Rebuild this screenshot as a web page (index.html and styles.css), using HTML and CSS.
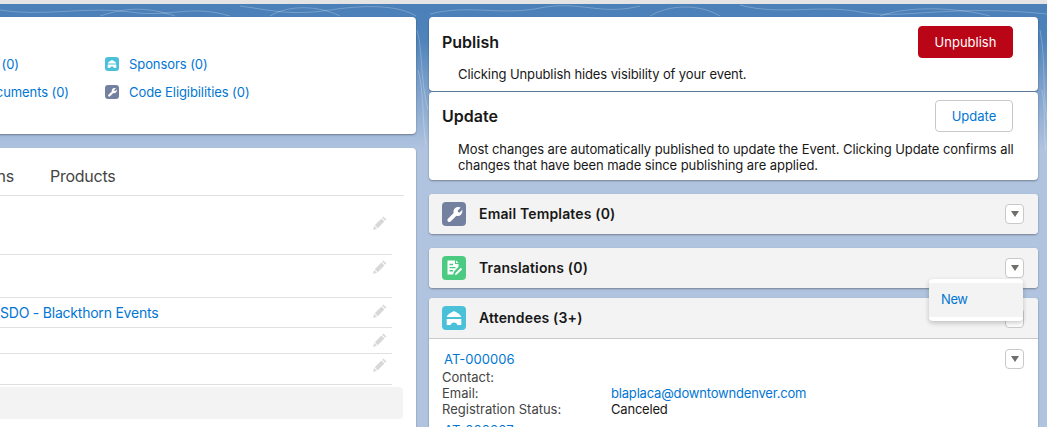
FILE: index.html
```html
<!DOCTYPE html>
<html lang="en">
<head>
<meta charset="utf-8">
<title>Event</title>
<link rel="stylesheet" href="styles.css">
</head>
<body>
<svg class="topo" width="1047" height="160" viewBox="0 0 1047 160" fill="none" aria-hidden="true">
  <path d="M0 10C40 17 90 6 130 12S190 4 230 16M100 16C130 6 150 8 175 16M240 6C270 10 290 16 330 10S400 6 416 16M270 16C290 4 320 6 340 16"/>
  <path d="M430 14C470 4 500 16 540 8S600 16 640 6M650 16C670 4 700 4 720 16M740 5C780 16 820 4 860 12S950 4 1047 14M880 16C910 5 960 8 990 16"/>
  <path d="M417 30C423 50 420 80 428 110M418 70C424 90 422 120 426 145M1040 30C1046 60 1042 90 1047 120M1042 90C1046 110 1043 130 1046 150"/>
</svg>
<div class="layout">
  <main class="left">
    <section class="card links">
      <div class="link-col">
        <a class="link-row" href="#"><span class="clip-name clip-short">Sessions (0)</span></a>
        <a class="link-row" href="#"><span class="clip-name">Documents (0)</span></a>
      </div>
      <div class="link-col">
        <a class="link-row" href="#">
          <span class="ico ico-sm teal"><svg viewBox="0 0 24 24"><use href="#tent"/></svg></span>Sponsors (0)
        </a>
        <a class="link-row" href="#">
          <span class="ico ico-sm slate"><svg viewBox="0 0 24 24"><use href="#wrench"/></svg></span>Code Eligibilities (0)
        </a>
      </div>
    </section>
    <section class="card details">
      <nav class="tabs">
        <span class="tab tab-first">Registrations</span>
        <span class="tab tab-last">Products</span>
      </nav>
      <div class="rows">
        <div class="row row-a"><svg class="pencil" viewBox="0 0 14 14"><use href="#pencil"/></svg></div>
        <div class="row row-b"><svg class="pencil" viewBox="0 0 14 14"><use href="#pencil"/></svg></div>
        <div class="row row-c"><a href="#" class="row-link">SDO - Blackthorn Events</a><svg class="pencil" viewBox="0 0 14 14"><use href="#pencil"/></svg></div>
        <div class="row row-d"><svg class="pencil" viewBox="0 0 14 14"><use href="#pencil"/></svg></div>
        <div class="row row-e"><svg class="pencil" viewBox="0 0 14 14"><use href="#pencil"/></svg></div>
      </div>
      <div class="section-bar"></div>
    </section>
  </main>
  <aside class="right">
    <div class="stack">
      <section class="card action action-publish">
        <div class="action-head">
          <h2>Publish</h2>
          <button class="btn btn-red">Unpublish</button>
        </div>
        <p>Clicking Unpublish hides visibility of your event.</p>
      </section>
      <section class="card action action-update">
        <div class="action-head">
          <h2>Update</h2>
          <button class="btn btn-white">Update</button>
        </div>
        <p>Most changes are automatically published to update the Event. Clicking Update confirms all changes that have been made since publishing are applied.</p>
      </section>
    </div>
    <section class="card related">
      <header class="rel-head">
        <span class="ico slate"><svg viewBox="0 0 24 24"><use href="#wrench"/></svg></span>
        <h3>Email Templates (0)</h3>
        <button class="caret" aria-label="Menu"><i></i></button>
      </header>
    </section>
    <section class="card related related-menu">
      <header class="rel-head">
        <span class="ico green"><svg viewBox="0 0 24 24"><use href="#doc"/></svg></span>
        <h3>Translations (0)</h3>
        <button class="caret" aria-label="Menu"><i></i></button>
      </header>
      <div class="menu"><a href="#">New</a></div>
    </section>
    <section class="card related attendees">
      <header class="rel-head">
        <span class="ico teal"><svg viewBox="0 0 24 24"><use href="#tent"/></svg></span>
        <h3>Attendees (3+)</h3>
        <button class="caret" aria-label="Menu"><i></i></button>
      </header>
      <div class="att-body">
        <div class="att-top">
          <a href="#" class="att-id">AT-000006</a>
          <button class="caret" aria-label="Menu"><i></i></button>
        </div>
        <dl class="att-grid">
          <dt>Contact:</dt><dd></dd>
          <dt>Email:</dt><dd><a href="#" class="att-mail">blaplaca@downtowndenver.com</a></dd>
          <dt>Registration Status:</dt><dd>Canceled</dd>
        </dl>
        <a href="#" class="att-id att-next">AT-000007</a>
      </div>
    </section>
  </aside>
</div>
<svg class="defs" width="0" height="0" aria-hidden="true">
  <defs>
    <g id="wrench"><path fill="#fff" d="M19.6 4.6l-3.3 3.3c-.2.2-.2.4 0 .6l.5 1.2 1.2.5c.2.2.4.2.6 0l3-3c.5 2.4-.2 4.6-1.8 5.9-1.4 1.2-3.3 1.5-5 1l-6.7 6.6c-.9.9-2.3.9-3.1 0-.9-.9-.9-2.3 0-3.1l6.6-6.7c-.5-1.8-.2-3.7 1-5.1 1.4-1.6 3.4-2.4 5.6-1.8z" transform="translate(12 12) scale(.86) translate(-12 -12)"/></g>
    <g id="tent"><path fill="#fff" d="M12 5l4.5 2.600c1.200.8 2.200 2 2.800 3.400H4.700c.6-1.400 1.600-2.600 2.800-3.400zM4.700 13h14.600v6h-4c-.2-1.500-1.600-2.600-3.300-2.600S8.900 17.500 8.700 19h-4z"/></g>
    <g id="doc"><path fill="#fff" fill-rule="evenodd" d="M5.500 4.500h7.500v3.500h3.500v2.800l-4.500 4.600-.8 3.100H5.500zm2 3.300v1.400h3.500V7.800zm0 3.100v1.400h6v-1.400zm0 3.100v1.400h3.500V14z"/><path fill="#fff" d="M14 4.500l2.500 2.500H14zM18.800 11.800l1.400 1.400-5.400 5.400-1.900.5.500-1.900z"/></g>
    <g id="pencil"><path fill="#d8d8d8" d="M10.400.6l3 3-1.200 1.200-3-3zM8.400 2.600l3 3-6.600 6.600-3-3zM1.200 10l2.800 2.800L0 14z"/></g>
  </defs>
</svg>
</body>
</html>
```
FILE: styles.css
```css
* { box-sizing: border-box; }
html, body { height: 427px; overflow: hidden; }
body {
  margin: 0;
  position: relative;
  font-family: Inter, "Liberation Sans", sans-serif;
  font-size: 13px;
  line-height: 16px;
  color: #181818;
  border-top: 4px solid #e4e4e4;
  background: linear-gradient(180deg, #4a7fb8 0, #4f83ba 40px, #7fa2cc 90px, #b0c4df 150px, #b0c4df 100%);
}
a { color: #0176d3; text-decoration: none; }
h2, h3, p, dl, dd { margin: 0; }
button { font: inherit; cursor: pointer; }
.topo { position: absolute; left: 0; top: -4px; }
.topo path { stroke: rgba(255,255,255,.24); stroke-width: 1; }
.defs { position: absolute; }
.layout {
  position: relative;
  display: flex;
  gap: 13px;
  margin-left: -84px;
  padding-top: 13px;
}
.left { width: 500px; display: flex; flex-direction: column; gap: 14px; flex: none; }
.right { width: 609px; flex: none; }
.card {
  background: #fff;
  border-radius: 4px;
  box-shadow: 0 1px 2px rgba(0,0,0,.35);
}
.links {
  height: 117px;
  padding-top: 39px;
  display: flex;
}
.link-col { display: flex; flex-direction: column; gap: 12px; }
.link-col:first-child { width: 189px; }
.link-row { display: flex; align-items: center; height: 16px; white-space: nowrap; letter-spacing: -.08px; }
.clip-name { display: block; width: 153px; text-align: right; }
.clip-short { width: 103px; }
.ico {
  width: 24px;
  height: 24px;
  border-radius: 4px;
  display: flex;
  flex: none;
  align-items: center;
  justify-content: center;
}
.ico svg { width: 100%; height: 100%; display: block; }
.ico-sm { width: 14px; height: 14px; border-radius: 3px; margin-right: 10px; }
.teal { background: #4bc0d9; }
.slate { background: #7480a0; }
.green { background: #4bca81; }
.details { height: 300px; padding: 0 12px 0 0; }
.tabs {
  height: 48px;
  border-bottom: 1px solid #e0e0e0;
  display: flex;
  align-items: center;
  padding-top: 9px;
  font-size: 16px;
  letter-spacing: -.25px;
  color: #444;
}
.tab { white-space: nowrap; flex: none; }
.tab-first { width: 98px; text-align: right; }
.tab-last { margin-left: 36px; }
.rows { margin-right: 12px; }
.row {
  display: flex;
  align-items: center;
  border-bottom: 1px solid #e0e0e0;
  padding-right: 5px;
}
.row-a { height: 59px; padding-bottom: 4px; }
.row-b { height: 43px; padding-bottom: 18px; }
.row-c { height: 30px; }
.row-c .pencil { margin-bottom: 3px; }
.row-d { height: 26px; padding-bottom: 2px; }
.row-e { height: 31px; padding-bottom: 8px; }
.row-link { margin-left: 84px; font-size: 14px; white-space: nowrap; letter-spacing: -.22px; }
.pencil { width: 14px; height: 14px; margin-left: auto; flex: none; }
.section-bar { height: 32px; margin: 2px 1px 0 0; background: #f3f3f3; border-radius: 4px; }
.stack { display: flex; flex-direction: column; gap: 1px; margin-bottom: 14px; }
.action { padding: 9px 25px 0 13px; }
.action-publish { height: 74px; }
.action-update { height: 88px; padding-top: 8px; }
.action-head { display: flex; justify-content: space-between; align-items: center; }
.action h2 { font-size: 16px; font-weight: 600; line-height: 32px; }
.action p { margin: 8px 0 0 16px; line-height: 16px; letter-spacing: -.1px; }
.action-update p { margin: 9px -2px 0 16px; letter-spacing: -.07px; }
.btn { height: 32px; border-radius: 4px; font-size: 13px; padding: 0; }
.btn-red { width: 95px; background: #ba0517; border: 1px solid #ba0517; color: #fff; }
.btn-white { width: 78px; background: #fff; border: 1px solid #c9c9c9; color: #0176d3; }
.related { position: relative; margin-bottom: 14px; }
.related-menu { margin-bottom: 10px; z-index: 2; }
.rel-head {
  height: 40px;
  background: #f3f3f3;
  border-radius: 4px;
  display: flex;
  align-items: center;
  padding: 0 14px 0 13px;
}
.rel-head h3 { margin-left: 13px; font-size: 14px; font-weight: 600; letter-spacing: .16px; }
.caret {
  width: 19px;
  height: 20px;
  margin-left: auto;
  background: #fff;
  border: 1px solid #c9c9c9;
  border-radius: 4px;
  padding: 0;
  display: flex;
  align-items: center;
  justify-content: center;
  flex: none;
}
.caret i { width: 0; height: 0; border-left: 4.5px solid transparent; border-right: 4.5px solid transparent; border-top: 6px solid #706e6b; }
.menu {
  position: absolute;
  top: 31px;
  right: 15px;
  width: 94px;
  height: 42px;
  background: #fff;
  border-radius: 4px;
  padding: 4px 0;
  box-shadow: 0 2px 5px rgba(0,0,0,.22);
}
.menu a { display: flex; align-items: center; height: 34px; padding: 0 0 2px 12px; background: #f3f3f3; letter-spacing: -.4px; }
.attendees { border-radius: 4px 4px 0 0; margin-bottom: 0; }
.attendees .rel-head { border-bottom: 1px solid #c9c9c9; height: 41px; border-radius: 4px 4px 0 0; }
.att-body { padding: 10px 14px 0 13px; height: 90px; overflow: hidden; }
.att-top { display: flex; align-items: center; height: 20px; }
.att-id { margin-left: 2px; letter-spacing: .02px; }
.att-grid {
  display: grid;
  grid-template-columns: 169px 1fr;
  grid-auto-rows: 16px;
}
.att-grid dt { color: #444; }
.att-grid dd { letter-spacing: -.2px; }
.att-mail { letter-spacing: -.18px; }
.att-next { display: block; margin-top: 5px; }
```
